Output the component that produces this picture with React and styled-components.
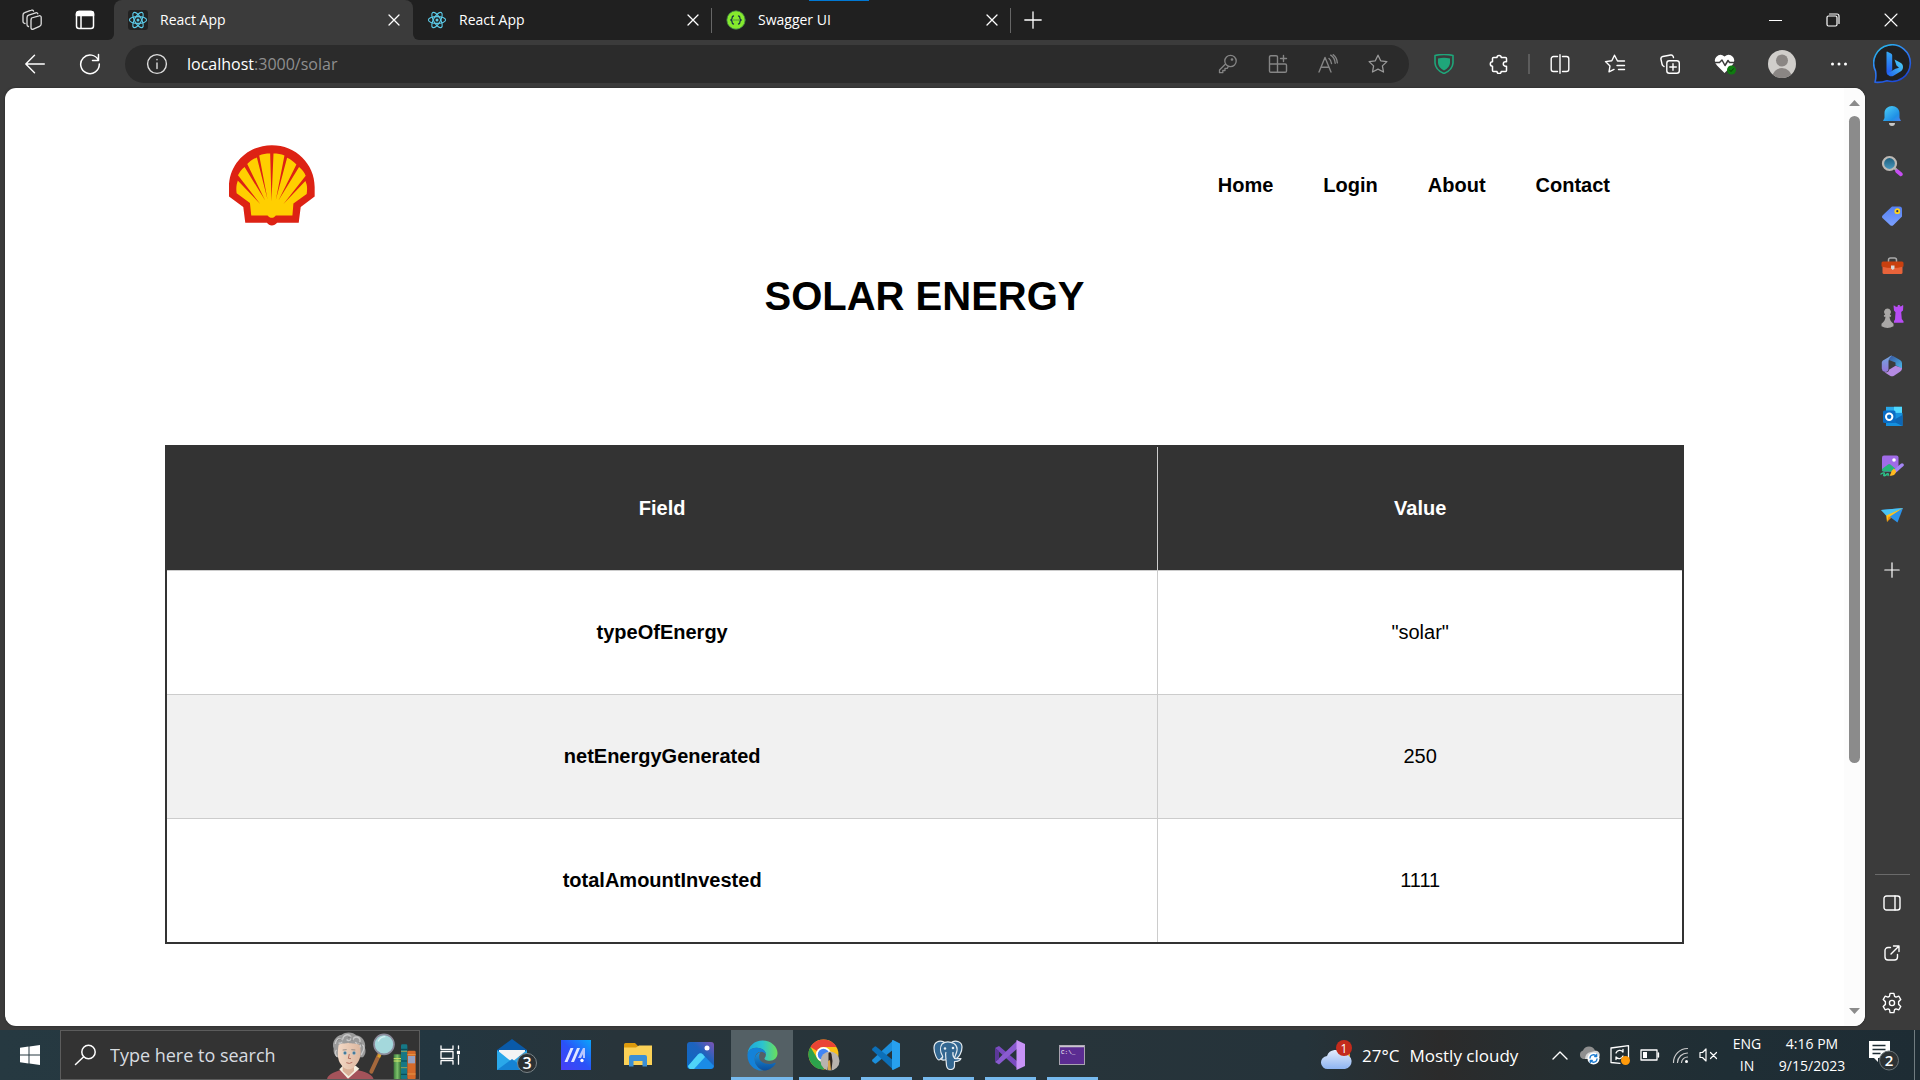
import React from "react";
import styled, { createGlobalStyle } from "styled-components";

const Global = createGlobalStyle`
  *, *::before, *::after { box-sizing: border-box; }
  body { margin: 0; background: #3b3b3b; overflow: hidden; }
  button, input { font: inherit; color: inherit; border: 0; padding: 0; margin: 0; background: none; outline: none; }
  svg { display: block; flex: none; }
`;

const ui = `"Segoe UI", "Open Sans", "Noto Sans", sans-serif`;

const Shell = styled.div`
  height: 100vh;
  display: flex;
  flex-direction: column;
  background: #3b3b3b;
  color: #fff;
  font-family: ${ui};
  font-size: 14px;
`;

/* ---------- tab strip ---------- */
const TabStrip = styled.header`
  position: relative;
  height: 40px;
  flex: none;
  display: flex;
  background: linear-gradient(#202020 50%, #3b3b3b 50%);
`;
const StripStart = styled.div`
  display: flex;
  padding: 0 3px 0 5px;
  background: #202020;
  border-bottom-right-radius: 6px;
`;
const StripRest = styled.div`
  flex: 1;
  display: flex;
  background: #202020;
  border-bottom-left-radius: 6px;
`;
const Cell = styled.button`
  width: ${(p) => p.$w || 50}px;
  height: ${(p) => p.$h || 40}px;
  flex: none;
  display: flex;
  align-items: center;
  justify-content: center;
`;
const Tab = styled.div`
  width: 299px;
  height: 40px;
  flex: none;
  display: flex;
  align-items: center;
  gap: 12px;
  padding: 0 9px 0 14px;
  border-radius: 8px 8px 0 0;
  background: ${(p) =>
    p.$active ? "#3b3b3b" : "linear-gradient(#666, #666) right center / 1px 25px no-repeat"};
`;
const TabTitle = styled.span`
  flex: 1;
  line-height: 20px;
`;
const Favicon = styled.span`
  display: flex;
  border-radius: 3px;
  background: ${(p) => (p.$dark ? "#222" : "transparent")};
`;
const WindowControls = styled.div`
  display: flex;
  margin-left: auto;
`;
const LoadBar = styled.div`
  position: absolute;
  top: 0;
  left: 809px;
  width: 60px;
  height: 1px;
  background: #0078d4;
`;

/* ---------- toolbar ---------- */
const Toolbar = styled.nav`
  height: 48px;
  flex: none;
  display: flex;
  align-items: center;
  padding-left: 7px;
`;
const AddressBar = styled.form`
  flex: 1;
  height: 38px;
  margin: 0 7px 0 8px;
  padding: 0 6px 0 12px;
  border-radius: 19px;
  background: #2b2b2b;
  display: flex;
  align-items: center;
  font-size: 16px;
  color: #8f8f8f;
`;
const Host = styled.label`
  color: #fff;
  line-height: 22px;
  padding-left: 10px;
`;
const UrlInput = styled.input`
  flex: 1;
  min-width: 0;
  line-height: 22px;
`;
const Divider = styled.span`
  width: 2px;
  height: 20px;
  margin: 0 2px;
  background: #5c5c5c;
`;

/* ---------- body ---------- */
const Body = styled.div`
  flex: 1;
  min-height: 0;
  display: flex;
  padding-left: 5px;
`;
const PageFrame = styled.div`
  flex: 1;
  margin-bottom: 4px;
  display: flex;
  overflow: hidden;
  background: #fff;
  border-radius: 11px;
  box-shadow: 0 0 2px #222;
`;
const Page = styled.main`
  flex: 1;
  color: #000;
  font-family: Arial, "Liberation Sans", sans-serif;
  font-size: 20px;
`;
const PageHeader = styled.div`
  display: flex;
  align-items: center;
  justify-content: space-between;
  padding: 57px 234px 0 224px;
`;
const Links = styled.nav`
  display: flex;
  gap: 50px;
`;
const NavLink = styled.a`
  color: #000;
  font-weight: bold;
  text-decoration: none;
`;
const Title = styled.h1`
  margin: 47px 0 126px;
  text-align: center;
  font-size: 40px;
  line-height: 46px;
`;
const DataTable = styled.table`
  width: calc(100% - 320px);
  margin: 0 160px;
  border-collapse: collapse;
  border: 2px solid #333;
  text-align: center;

  th,
  td {
    padding: 50px;
    border: 1px solid #ccc;
    line-height: 23px;
  }
  thead tr {
    background: #333;
    color: #fff;
  }
  tbody tr:nth-child(even) {
    background: #f1f1f1;
  }
`;
const Scrollbar = styled.div`
  width: 21px;
  display: flex;
  flex-direction: column;
  align-items: center;
  padding: 11px 0 11px;
  background: #fcfcfc;
`;
const Track = styled.div`
  flex: 1;
  width: 11px;
  padding: 9px 0;
`;
const Thumb = styled.div`
  height: 73.4%;
  border-radius: 6px;
  background: #8b8b8b;
`;

/* ---------- sidebar ---------- */
const Sidebar = styled.aside`
  width: 55px;
  display: flex;
  flex-direction: column;
  align-items: center;
  padding: 3px 1px 2px 0;
`;
const SideGap = styled.div`
  height: 4px;
`;
const SideBottom = styled.div`
  margin-top: auto;
  border-top: 1px solid #6a6a6a;
  width: 35px;
  padding-top: 3px;
`;

/* ---------- taskbar ---------- */
const Taskbar = styled.footer`
  height: 50px;
  flex: none;
  display: flex;
  align-items: center;
  background: linear-gradient(90deg, #263941 0%, #233640 23%, #28343a 32%, #27343a 55%, #25333a 68%, #2b2b2b 75%, #242f33 82%, #1f2e35 90%, #1e2c34 100%);
`;
const SearchBox = styled.label`
  width: 360px;
  height: 50px;
  display: flex;
  align-items: center;
  border: 1px solid #5c5c5c;
  background: #333;
  padding-left: 13px;
`;
const SearchInput = styled.input`
  flex: 1;
  min-width: 0;
  padding-left: 13px;
  font-size: 18px;
  color: #d8dce0;
  &::placeholder {
    color: #d8dce0;
    opacity: 1;
  }
`;
const TaskList = styled.div`
  display: flex;
  margin-left: 3px;
`;
const TaskItem = styled.button`
  width: 62px;
  height: 50px;
  flex: none;
  display: flex;
  align-items: center;
  justify-content: center;
  background: ${(p) =>
    p.$active
      ? "linear-gradient(#76b9ed, #76b9ed) center bottom / 100% 3px no-repeat, #546065"
      : p.$open
      ? "linear-gradient(#76b9ed, #76b9ed) center bottom / 51px 3px no-repeat"
      : "transparent"};
`;
const Tray = styled.div`
  margin-left: auto;
  display: flex;
  align-items: center;
`;
const Weather = styled.button`
  display: flex;
  align-items: center;
  gap: 10px;
  width: 229px;
  font-size: 17px;
  white-space: nowrap;
`;
const Stack = styled.button`
  width: ${(p) => p.$w}px;
  display: flex;
  flex-direction: column;
  text-align: center;
  line-height: 22px;
  font-size: 14px;
`;
const DesktopEdge = styled.button`
  width: 6px;
  height: 50px;
  border-left: 1px solid #717c81;
`;

/* ---------- drawings ---------- */
const S = ({ w = 20, h = w, vb, c = "#fff", sw = 1.4, children }) => (
  <svg width={w} height={h} viewBox={vb || `0 0 ${w} ${h}`} fill="none" stroke={c} strokeWidth={sw} strokeLinecap="round" strokeLinejoin="round" aria-hidden="true">
    {children}
  </svg>
);

const ReactLogo = () => (
  <S w={20} c="#5ccbe8" sw={1.1}>
    <ellipse cx="10" cy="10" rx="8.6" ry="3.4" />
    <ellipse cx="10" cy="10" rx="8.6" ry="3.4" transform="rotate(60 10 10)" />
    <ellipse cx="10" cy="10" rx="8.6" ry="3.4" transform="rotate(120 10 10)" />
    <circle cx="10" cy="10" r="1.5" fill="#5ccbe8" stroke="none" />
  </S>
);
const SwaggerLogo = () => (
  <S w={20} c="#173647" sw={1.3}>
    <circle cx="10" cy="10" r="9.2" fill="#85ea2d" stroke="#3f7f4a" strokeWidth=".8" />
    <path d="M7.500 6c-1.400 0-1.400.8-1.400 1.900S5.800 9.800 4.800 10c1 .2 1.300 1 1.300 2.100s0 1.900 1.400 1.900M12.500 6c1.400 0 1.400.8 1.400 1.900s.3 1.900 1.300 2.100c-1 .2-1.300 1-1.300 2.100s0 1.900-1.400 1.900" />
    <path d="M8 10h.1M10 10h.1M12 10h.1" strokeWidth="1" />
  </S>
);
const Close = () => (
  <S w={12} sw={1.3}><path d="M1 1l10 10M11 1L1 11" /></S>
);
const Workspaces = () => (
  <S w={20} h={22} c="#ddd" sw={1.3}>
    <path d="M9.500 9l7.500-2.200a1.600 1.600 0 0 1 2.200 1.500V15a2.500 2.500 0 0 1-1.700 2.300l-6.200 2.900a1.600 1.600 0 0 1-2.300-1.500V11z" />
    <path d="M6.500 17.500a2 2 0 0 1-1.500-2V8.500a2.500 2.500 0 0 1 1.700-2.400l7-2.300c1-.3 1.800.1 2.100 1M3 14.500a2 2 0 0 1-2-2V6A2.500 2.500 0 0 1 2.700 3.600L9.300 1.200c1-.4 1.900 0 2.200.9" />
  </S>
);
const TabActions = () => (
  <S w={20} sw={1.5}>
    <rect x="1.500" y="1.500" width="17" height="17" rx="2.500" />
    <path d="M1.500 4A2.500 2.500 0 0 1 4 1.500h12A2.500 2.500 0 0 1 18.500 4v1.500h-17z" fill="#fff" />
    <path d="M6 6v12" />
  </S>
);
const Bell = () => (
  <S w={20} h={22} sw={0}>
    <defs><linearGradient id="bell" x1="0" y1="0" x2="1" y2="1"><stop offset="0" stopColor="#4fd2f7" /><stop offset=".7" stopColor="#1f90e6" /><stop offset="1" stopColor="#4a80f0" /></linearGradient></defs>
    <path d="M10 1c4 0 7.500 3 7.500 7v5l1.500 3H1l1.500-3V8c0-4 3.500-7 7.500-7z" fill="url(#bell)" />
    <path d="M7 18h6a3 3 0 0 1-6 0z" fill="#c8c8c8" />
  </S>
);
const SideSearch = () => (
  <S w={22} sw={0}>
    <defs><linearGradient id="lens" x1="0" y1="0" x2="0" y2="1"><stop offset="0" stopColor="#1b5a78" /><stop offset="1" stopColor="#4c9cc2" /></linearGradient></defs>
    <path d="M13.500 13l2 2" stroke="#a9a9a9" strokeWidth="2.500" />
    <circle cx="8.500" cy="8.500" r="6.500" fill="url(#lens)" stroke="#bdb9b5" strokeWidth="2.200" />
    <path d="M16.200 16.200l3.600 3" stroke="#c64df2" strokeWidth="3.800" />
  </S>
);
const Tag = () => (
  <S w={22} sw={0}>
    <defs><linearGradient id="tag" x1="0" y1="0" x2="0" y2="1"><stop offset="0" stopColor="#5580f0" /><stop offset="1" stopColor="#7ba0ff" /></linearGradient></defs>
    <path d="M11 1.500h7.500a2.500 2.500 0 0 1 2.500 2.500v7.500L12.500 20a2.500 2.500 0 0 1-3.500 0l-7-6.500a2.300 2.300 0 0 1 0-3.500z" fill="url(#tag)" />
    <circle cx="16.300" cy="6.200" r="2" stroke="#ffd21a" strokeWidth="1.800" fill="#27336b" />
  </S>
);
const Toolbox = () => (
  <S w={23} h={18} sw={0}>
    <path d="M7.500 5V3a2 2 0 0 1 2-2h4a2 2 0 0 1 2 2v2" stroke="#aaa" strokeWidth="1.500" />
    <path d="M1.500 9h20v6.500a1.500 1.500 0 0 1-1.500 1.500H3a1.500 1.500 0 0 1-1.500-1.500z" fill="#e8633a" />
    <path d="M2 4.500h19a1.500 1.500 0 0 1 1.500 1.500v3.500q-11 3-22 0V6A1.500 1.500 0 0 1 2 4.500z" fill="#c9400f" />
    <path d="M10 8.500h3.500v3l-1.700 1.500-1.800-1.500z" fill="#d8d8d8" />
  </S>
);
const Chess = () => (
  <S w={24} sw={0}>
    <path d="M13.500 1.500l2 .5V3l2.300-.5V1h2v1.500L22 2v-.8l1.300.3-.3 5-1.800 1.500.6 7 1.700 2.200v1.500h-9.500V17l1-1.500.5-7.300L14 6.500z" fill="#b84df5" />
    <path d="M7.500 4.500a3.400 3.400 0 0 1 2.300 5.900l1.400 1.100-.2 1.200H9.500c.2 3 1.500 5 4 7v2.500a12 12 0 0 1-12 0v-2.500c2.500-2 3.800-4 4-7H4l-.2-1.200 1.400-1.100a3.400 3.400 0 0 1 2.300-5.900z" fill="#a9a7a6" />
  </S>
);
const M365 = () => (
  <S w={22} sw={0}>
    <defs>
      <linearGradient id="ma" x1="0" y1="0" x2="0" y2="1"><stop offset="0" stopColor="#71a7dd" /><stop offset="1" stopColor="#9474d7" /></linearGradient>
      <linearGradient id="mb" x1="0" y1="0" x2="1" y2="1"><stop offset="0" stopColor="#39549f" /><stop offset="1" stopColor="#48b8e9" /></linearGradient>
    </defs>
    <path d="M8.500 1.300q2-1 4 0l6.500 3.700A3.600 3.600 0 0 1 21 8v5.500L14.500 10.300V7.500L8 5z" fill="url(#mb)" />
    <path d="M11 .6c-2 1.500-3.500 3.700-3.500 6v7.700c0 2-2 3-4 2.500A3.600 3.600 0 0 1 .8 13.500V8c0-1.500.7-2.300 2-3.100l6-3.500q1-.7 2.200-.8z" fill="url(#ma)" />
    <path d="M8 14.700l6.500-4 6.500 2.300c0 2-.7 3-2 3.700l-6 4a4 4 0 0 1-4 0l-5.500-3.500c2 .5 4.500-.3 4.500-2.500z" fill="#b58be3" />
  </S>
);
const Outlook = () => (
  <S w={21} sw={0}>
    <path d="M4 .8h16v13H4z" fill="#28a8ea" />
    <path d="M12 .8h8v6h-8z" fill="#50d9ff" />
    <path d="M4 7h16.500v13H4z" fill="#1490df" />
    <path d="M20.500 9L10 15l10.500 5z" fill="#0d66b5" />
    <rect x="1" y="4.500" width="12.500" height="12.500" rx="1.500" fill="#0a6cc4" />
    <circle cx="7.200" cy="10.700" r="3.200" stroke="#fff" strokeWidth="2" />
  </S>
);
const Designer = () => (
  <S w={24} sw={0}>
    <rect x="2" y="1.500" width="16.500" height="16" rx="2" fill="#a06be8" />
    <path d="M2 15l6-4.500q1.200-.8 2.400 0l6 5-3 2H3.500a1.500 1.500 0 0 1-1.500-1z" fill="#25b57a" />
    <circle cx="14" cy="6" r="1.800" fill="#fff" />
    <path d="M22 11l-8 7" stroke="#a486f5" strokeWidth="3.500" />
    <path d="M16 17l-2-2.500-2.500 2.500c-.5 2-1 3.500-2 4.500 4 1 6.500-1.500 6.500-4.500z" fill="#ffb91f" />
    <path d="M1 20c3-2 4-1 3 .5s1 2 3-.5c.8-1 2 0 1 1.500" stroke="#2bc48a" strokeWidth="1.400" />
  </S>
);
const Plane = () => (
  <S w={24} h={20} sw={0}>
    <path d="M1 4l22-2-5.500 14.500-5.700-4.200z" fill="#2c93ea" />
    <path d="M1 4l22-2L6.500 10z" fill="#49c4f4" />
    <path d="M6.200 9.500L23 2 10 10.500l-3 5.500z" fill="#ffc31f" />
    <path d="M11.500 11.500l-4.500 4.500 1.600-5.500z" fill="#e88b0d" />
  </S>
);
const Gear = ({ size = 22 }) => (
  <S w={size} vb="0 0 24 24" sw={1.5}>
    <path d="M9.900 1.500h4.200l.7 3.200 1.600.9 3.100-1 2.100 3.700-2.400 2.200v3l2.400 2.200-2.100 3.700-3.100-1-1.600.9-.7 3.200H9.900l-.7-3.200-1.600-.9-3.100 1-2.100-3.700 2.400-2.200v-3L2.400 8.300l2.100-3.700 3.100 1 1.600-.9z" />
    <circle cx="12" cy="12" r="2.800" />
  </S>
);
const Bing = () => (
  <S w={40} sw={0}>
    <defs>
      <linearGradient id="bo" x1="0" y1="0" x2=".6" y2="1"><stop offset="0" stopColor="#25c4e8" /><stop offset=".5" stopColor="#2f7ef5" /><stop offset="1" stopColor="#1c49d6" /></linearGradient>
      <linearGradient id="bl" x1="0" y1="0" x2="0" y2="1"><stop offset="0" stopColor="#36a9f2" /><stop offset="1" stopColor="#1f55f0" /></linearGradient>
      <linearGradient id="br" x1="0" y1="1" x2="1" y2="0"><stop offset="0" stopColor="#1c5ff0" /><stop offset="1" stopColor="#4fd8f5" /></linearGradient>
    </defs>
    <path d="M2 38.200Q3.500 33 2.500 27A18.300 18.300 0 1 1 14 36.700Q8 38.800 2 38.200z" fill="#1f2022" stroke="url(#bo)" strokeWidth="1.600" />
    <path d="M14 7.500l4 2a1.800 1.800 0 0 1 1.200 1.700V26L15 31a4 4 0 0 1-1.500-3V8z" fill="url(#bl)" />
    <path d="M21.500 15.500l5.500 3a5 5 0 0 1 3 4.500c0 2-1 3.500-2.500 4.500l-7 4.300c-2.500 1.400-5.500 0-6.300-2.300l8.300-4.700 3.500-1-2.500-2.300z" fill="url(#br)" />
  </S>
);

const ShellLogo = () => (
  <svg width="86" height="81" viewBox="235 45 259 243" aria-label="Shell logo" role="img">
    <path d="M364 45c-72 0-129 56-129 126v29l43 31 6 48h65c4 5 9 8 15 8s12-3 16-8h65l6-48 42-31v-29C493 101 436 45 364 45z" fill="#dd2214" />
    <path d="M262 152l67 70-67-86c5-10 11-18 20-25l62 101-54-110c7-8 17-15 29-20l32 127-25-133c10-4 20-6 33-6l4 144 6-144c12 0 23 2 33 6l-26 134 34-127c11 5 20 12 28 20l-54 109 62-101c9 8 16 16 20 26l-67 85 66-69c6 12 6 24 4 39l-40 29-3 36h-50c-4 5-7 7-12 7s-9-2-13-7h-49l-4-38-40-29c-2-15-1-26 4-39z" fill="#ffcf00" />
  </svg>
);

const SearchArt = () => (
  <svg width="93" height="48" viewBox="980 35 279 144" aria-hidden="true">
    <defs>
      <linearGradient id="skin" x1="0" x2="1"><stop offset="0" stopColor="#f3d9c6" /><stop offset="1" stopColor="#dcb79f" /></linearGradient>
      <linearGradient id="gbk" x1="0" x2="1"><stop offset="0" stopColor="#3d7b3c" /><stop offset=".5" stopColor="#7cc06a" /><stop offset="1" stopColor="#2f6a33" /></linearGradient>
    </defs>
    <path d="M983 180c2-18 30-24 50-32h30c20 8 55 10 60 32z" fill="#a4535a" />
    <path d="M1020 150l26 28 34-30-10-8h-40z" fill="#f4efe0" />
    <path d="M1030 135h34v20l-16 16-18-16z" fill="#d9b097" />
    <path d="M1003 88c-8-20 8-40 24-42 12-10 36-8 44 2 16 2 30 18 26 38 4 12 0 22-6 28l-72 2c-10-4-18-14-16-28z" fill="#9a9a9a" />
    <path d="M1018 76c10-6 20-2 28-6 12 4 24 0 36 8 4 26 2 42-10 56-6 8-12 16-24 16s-18-8-24-16c-10-14-10-36-6-58z" fill="url(#skin)" />
    <g fill="none" stroke="#c9c9c9" strokeWidth="4"><path d="M1008 74c0-12 10-20 18-14s-4 16-8 10M1030 60c2-14 18-18 24-8s-8 16-12 8M1060 62c4-14 20-10 22 0s-10 14-14 6M1082 84c2-12 12-8 12 2s-8 14-8 22M1012 92c-6 4-4 16 2 20" /></g>
    <g fill="none" stroke="#6f6f6f" strokeWidth="2"><path d="M1014 64c6-8 16-4 14 4M1046 56c8-6 14 0 12 8M1074 72c8-6 16 2 12 8M1030 92l12-1M1056 91l12 1" /></g>
    <circle cx="1037" cy="101" r="5" fill="#5c9bc2" /><circle cx="1064" cy="101" r="5" fill="#5c9bc2" />
    <circle cx="1037" cy="101" r="2" fill="#23404f" /><circle cx="1064" cy="101" r="2" fill="#23404f" />
    <path d="M1050 104l-3 13 8 1M1041 130q9 5 18-1" stroke="#b56f61" strokeWidth="3" fill="none" />
    <path d="M1140 105l-24 52" stroke="#a5683c" strokeWidth="12" strokeLinecap="round" />
    <path d="M1144 100l-6 14" stroke="#d9a32b" strokeWidth="9" />
    <circle cx="1154" cy="75" r="30" fill="#a4d8dc" stroke="#8b8b9b" strokeWidth="5" />
    <path d="M1136 66q8-14 22-14" stroke="#d6f1f2" strokeWidth="4" fill="none" />
    <rect x="1183" y="105" width="22" height="75" fill="url(#gbk)" />
    <path d="M1183 118h22M1183 125h22" stroke="#d8e86a" strokeWidth="3" />
    <rect x="1205" y="75" width="19" height="105" rx="4" fill="#167886" />
    <path d="M1205 90h19M1205 125h19M1205 165h19" stroke="#0a4550" strokeWidth="3" />
    <path d="M1205 96h19M1205 145h19" stroke="#d8b43d" strokeWidth="2" />
    <rect x="1224" y="94" width="25" height="86" rx="4" fill="#d4692a" />
    <rect x="1226" y="110" width="21" height="22" fill="#97a2c4" />
    <path d="M1224 106h25M1224 164h25" stroke="#f0b055" strokeWidth="2" />
  </svg>
);

const MailIcon = () => (
  <svg width="46" height="38" viewBox="1 0 46 38" aria-hidden="true">
    <path d="M7 14L22 3l15 11v4H7z" fill="#0a5aa8" />
    <path d="M9 14h26v14H9z" fill="#f4f4f4" />
    <path d="M7 14l15 12 15-12v20H7z" fill="#2aa8ea" />
    <path d="M7 34l15-11 15 11z" fill="#1583d4" />
    <circle cx="37" cy="27" r="9.500" fill="#2b3134" stroke="#7b8488" />
    <text x="37" y="33" fill="#fff" fontFamily="Open Sans, sans-serif" fontSize="16" fontWeight="600" textAnchor="middle">3</text>
  </svg>
);
const AsusIcon = () => (
  <svg width="30" height="30" viewBox="0 0 30 30" aria-hidden="true">
    <defs><linearGradient id="as" x1="0" y1="1" x2="1" y2="0"><stop offset="0" stopColor="#4a3df5" /><stop offset=".5" stopColor="#2a52f8" /><stop offset="1" stopColor="#0aa6fb" /></linearGradient></defs>
    <rect width="30" height="30" fill="url(#as)" />
    <path d="M3.500 22L9.500 8h3L6.500 22zM10 22l6-14h3l-6 14z" fill="#dfe6ff" />
    <path d="M17.500 17L22 8h2v10h-2v-4l-2 4h-3z" fill="#b9c8ff" />
    <circle cx="21" cy="20.500" r="1.700" fill="#fff" />
  </svg>
);
const FolderIcon = () => (
  <svg width="28" height="24" viewBox="0 0 28 24" aria-hidden="true">
    <path d="M0 1.500A1.500 1.500 0 0 1 1.500 0H11l3 3v4H0z" fill="#dd9a0c" />
    <path d="M0 4.500h12l3-2h13V22H0z" fill="#fbd157" />
    <path d="M5 23.500V14a2 2 0 0 1 2-2h14a2 2 0 0 1 2 2v9.500h-4.500V18h-9v5.500z" fill="#3b8fd6" />
  </svg>
);
const PhotosIcon = () => (
  <svg width="27" height="27" viewBox="0 0 27 27" aria-hidden="true">
    <defs><linearGradient id="ph" x1="0" y1="1" x2="1" y2="0"><stop offset="0" stopColor="#0b6ac5" /><stop offset=".6" stopColor="#1e63bd" /><stop offset="1" stopColor="#8054b4" /></linearGradient></defs>
    <rect width="27" height="27" rx="3" fill="url(#ph)" />
    <path d="M1 24L11 12.500q2.500-2.500 5 0L27 24q-1 3-3 3H3q-1.500 0-2-3z" fill="#1a8be6" />
    <path d="M1 24L11 12.500q2.500-2.500 5 0l2 2.500L7 27H3q-1.500 0-2-3z" fill="#4fd4f9" />
    <circle cx="20" cy="6" r="2.500" fill="#fff" />
  </svg>
);
const EdgeIcon = () => (
  <svg width="31" height="31" viewBox="0 0 32 32" aria-hidden="true">
    <defs>
      <linearGradient id="e1" x1="0" x2="1"><stop offset="0" stopColor="#1ba6dd" /><stop offset=".5" stopColor="#2cc3cf" /><stop offset="1" stopColor="#6be05a" /></linearGradient>
      <linearGradient id="e2" x1="0" y1="0" x2="0" y2="1"><stop offset="0" stopColor="#1b93dc" /><stop offset="1" stopColor="#0b4f9e" /></linearGradient>
    </defs>
    <path d="M.5 14C1.500 6 8 .5 16 .5c9 0 15.500 6.500 15.500 13 0 5-3.500 8-8 8-4 0-5.500-1.500-5.500-2.300 0-.7 1.500-1.500 1.500-4.200C19.500 11 15 8 10 8 5 8 1.500 11 .5 14z" fill="url(#e1)" />
    <path d="M.5 15C1 10.500 5 8 10 8c5 0 9.500 3 9.500 7 0 0-1.500-3-5-3S8 15 8 20s4 10 9 11.500C8 32.500 0 25 .5 15z" fill="#1482d8" />
    <path d="M14 12.500C10 14 8 17 8 20.500c0 5 4 9.500 9.500 11 5 0 9.500-3 12-7 .5-1-.3-1.300-1-1-6 3-16 .5-16-6 0-2 .5-3.500 1.500-5z" fill="url(#e2)" />
  </svg>
);
const ChromeIcon = () => (
  <svg width="32" height="32" viewBox="0 0 32 32" aria-hidden="true">
    <circle cx="15.500" cy="15.500" r="15" fill="#fbc116" />
    <path d="M2.500 8A15 15 0 0 1 28.500 8H15.500a7.500 7.500 0 0 0-6.500 4z" fill="#ea4335" />
    <path d="M2.500 8A15 15 0 0 0 15.500 30.500L21 20a7 7 0 0 1-12-1z" fill="#2ca24c" />
    <circle cx="15.500" cy="15.500" r="7.500" fill="#fff" /><circle cx="15.500" cy="15.500" r="5.700" fill="#4285f4" />
    <circle cx="22" cy="22" r="9.500" fill="#b9b3ad" />
    <path d="M20.500 14q2-2 3 1l1 7-1 9h-4l1-8z" fill="#2d2521" /><path d="M20 22l2-1 1 10h-3z" fill="#d7a34b" />
  </svg>
);
const CodeIcon = () => (
  <svg width="30" height="30" viewBox="0 0 30 30" aria-hidden="true">
    <path d="M22 .5L1.500 19.500q-1 1 0 2l2 1.800q.8.700 1.800 0L23 9z" fill="#1c8fdc" />
    <path d="M22 29.500L1.500 10.500q-1-1 0-2l2-1.800q.8-.7 1.800 0L23 21z" fill="#0c6fb8" />
    <path d="M22 0l7 3.500v23L22 30q-1 0-1-1V1q0-1 1-1z" fill="#27a0ee" />
  </svg>
);
const PgIcon = () => (
  <svg width="30" height="30" viewBox="0 0 30 30" aria-hidden="true" fill="#336791" stroke="#e4ebf0" strokeWidth="1.200" strokeLinejoin="round">
    <path d="M11 2C6 0 1 2 1 8c0 5 3 12 5 12 1.500 0 2.500-2 3.500-3zM19 2c4-2 10-.5 10 5 0 5-3 10-5 11l-4 1z" />
    <path d="M9 4q5-4 12-.5c3 2 3.500 6 2.500 9-.8 2.500-2 4.500-2 6 2 .5 5 0 6.500 0-1 2.500-4 3-6.500 3v4c0 3-2 4-4 4s-3.500-1-4-4l-.5-6c-2 1-4 .5-5-.5 1.500-.5 2-1.500 1.500-3C7 12 7 7 9 4z" />
    <path d="M13 19c-.5-3-1-5 0-7M21.500 18c-1-1-2-3-1.500-6" fill="none" />
    <circle cx="12" cy="8.500" r=".7" /><circle cx="20" cy="8" r=".7" />
  </svg>
);
const VsIcon = () => (
  <svg width="30" height="30" viewBox="0 0 30 30" aria-hidden="true">
    <path d="M0 8l4-2L23 22v7z" fill="#7a4bc0" /><path d="M0 22l4 2.500L23 8V0z" fill="#8a5bd0" />
    <path d="M0 8v14l4-3v-8z" fill="#5b3798" />
    <path d="M21.500 0L30 4v22l-8.500 4z" fill="#c893f7" />
  </svg>
);
const TermIcon = () => (
  <svg width="26" height="20" viewBox="0 0 26 20" aria-hidden="true">
    <rect x=".5" y=".5" width="25" height="19" fill="#5b2c92" stroke="#a9a3b0" />
    <path d="M1 1.500h24" stroke="#c9c5ce" strokeWidth="1.500" />
    <text x="2" y="9" fill="#fff" fontFamily="Liberation Mono, monospace" fontSize="6">C:\_</text>
  </svg>
);
const WeatherIcon = () => (
  <svg width="31" height="30" viewBox="0 0 31 30" aria-hidden="true">
    <defs><linearGradient id="cl" x1="0" y1="0" x2="0" y2="1"><stop offset="0" stopColor="#e3ecfb" /><stop offset="1" stopColor="#8db4f2" /></linearGradient></defs>
    <circle cx="23" cy="15" r="6" fill="#f3a623" />
    <path d="M7 29a6.500 6.500 0 0 1-1-13 9 9 0 0 1 16-2 7.500 7.500 0 0 1 2 15z" fill="url(#cl)" />
    <circle cx="23" cy="8" r="8" fill="#c42b1c" />
    <text x="23" y="12.500" fill="#fff" fontFamily="Open Sans, sans-serif" fontSize="12" textAnchor="middle">1</text>
  </svg>
);
const NoticeIcon = () => (
  <svg width="32" height="32" viewBox="0 0 32 32" aria-hidden="true">
    <path d="M1 2h21v17H10v4l-4-4H1z" fill="#fff" />
    <path d="M4.500 6.500h13M4.500 10.500h13M4.500 14.500h8" stroke="#1e2c34" strokeWidth="1.300" />
    <circle cx="21" cy="21.500" r="9.500" fill="#2d3234" stroke="#6c7579" />
    <text x="21" y="27" fill="#fff" fontFamily="Open Sans, sans-serif" fontSize="15" fontWeight="600" textAnchor="middle">2</text>
  </svg>
);

const tabs = [
  { title: "React App", icon: <ReactLogo />, active: true },
  { title: "React App", icon: <ReactLogo /> },
  { title: "Swagger UI", icon: <SwaggerLogo /> },
];
const TabView = ({ tab }) => (
  <Tab $active={tab.active}>
    <Favicon $dark={tab.active}>{tab.icon}</Favicon>
    <TabTitle>{tab.title}</TabTitle>
    <Cell $w={20} $h={20} aria-label="Close tab"><Close /></Cell>
  </Tab>
);

const sideApps = [
  ["Notifications", Bell], ["Search", SideSearch], ["Shopping", Tag], ["Tools", Toolbox], ["Games", Chess],
  ["Microsoft 365", M365], ["Outlook", Outlook], ["Designer", Designer], ["Drop", Plane],
];
const taskApps = [
  ["Mail", MailIcon], ["MyASUS", AsusIcon], ["File Explorer", FolderIcon], ["Photos", PhotosIcon],
  ["Edge", EdgeIcon, "active"], ["Chrome", ChromeIcon, "open"], ["VS Code", CodeIcon, "open"],
  ["pgAdmin", PgIcon, "open"], ["Visual Studio", VsIcon, "open"], ["Terminal", TermIcon, "open"],
];
const rows = [
  ["typeOfEnergy", '"solar"'],
  ["netEnergyGenerated", "250"],
  ["totalAmountInvested", "1111"],
];

export default function App() {
  return (
    <Shell>
      <Global />
      <TabStrip>
        <StripStart>
          <Cell $w={54} aria-label="Workspaces"><Workspaces /></Cell>
          <Cell $w={52} aria-label="Tab actions"><TabActions /></Cell>
        </StripStart>
        <TabView tab={tabs[0]} />
        <StripRest>
          <TabView tab={tabs[1]} />
          <TabView tab={tabs[2]} />
          <Cell $w={44} aria-label="New tab"><S w={18} sw={1.3}><path d="M9 .8v16.400M.8 9h16.400" /></S></Cell>
          <WindowControls>
            <Cell $w={58} aria-label="Minimize"><S w={13} sw={1}><path d="M0 6.500h13" /></S></Cell>
            <Cell $w={58} aria-label="Restore"><S w={14} sw={1.200}><rect x="1" y="3" width="10" height="10" rx="1.500" /><path d="M3.500 1H11a2 2 0 0 1 2 2v7.500" /></S></Cell>
            <Cell $w={58} aria-label="Close"><S w={14} sw={1.100}><path d="M1 1l12 12M13 1L1 13" /></S></Cell>
          </WindowControls>
        </StripRest>
        <LoadBar />
      </TabStrip>

      <Toolbar>
        <Cell $w={55} aria-label="Back"><S w={20} sw={1.400}><path d="M19.300 10H.8M9.500 1.300L.8 10l8.700 8.700" /></S></Cell>
        <Cell $w={55} aria-label="Refresh"><S w={22} sw={1.500}><path d="M19.500 7.500A9.300 9.300 0 1 0 20.300 11M19.500 1.500v6h-6" /></S></Cell>
        <AddressBar onSubmit={(e) => e.preventDefault()}>
          <Cell $w={40} type="button" aria-label="Site information"><S w={22} c="#ddd" sw={1.400}><circle cx="11" cy="11" r="9.400" /><path d="M11 10v5.500M11 6.500v.3" /></S></Cell>
          <Host htmlFor="url">localhost</Host>
          <UrlInput id="url" defaultValue=":3000/solar" />
          <Cell type="button" aria-label="Passwords"><S w={20} c="#858585" sw={1.300}><circle cx="12.500" cy="7" r="5.700" /><circle cx="14" cy="5.500" r=".7" /><path d="M7.500 10L1.500 16v2.700h3.300v-2.200H7v-2.200h2.200l1.200-1.800" /></S></Cell>
          <Cell type="button" aria-label="Add app"><S w={20} c="#858585" sw={1.400}><path d="M9.500 10V3a1.300 1.300 0 0 0-1.300-1.300H2.800A1.300 1.300 0 0 0 1.500 3v7zM1.500 10v7a1.300 1.300 0 0 0 1.300 1.300h14.400a1.300 1.300 0 0 0 1.300-1.300v-5.700a1.300 1.300 0 0 0-1.300-1.300zM9.500 10v8.300M15.500 1.500v6M12.500 4.500h6" /></S></Cell>
          <Cell type="button" aria-label="Read aloud"><S w={20} c="#858585" sw={1.400}><path d="M1 18L7 3.500 13 18M3 13.300h8M11 4.500q2 1.500 2.500 5M12.700 1.200q4 2.500 4.500 8M15.300.8q3.700 3 4 8" /></S></Cell>
          <Cell type="button" aria-label="Favorite"><S w={20} c="#9a9a9a" sw={1.300}><path d="M10 1.200l2.700 5.600 6.200.8-4.500 4.300 1.100 6.100L10 15.100 4.500 18l1.100-6.100L1.100 7.600l6.200-.8z" /></S></Cell>
        </AddressBar>
        <Cell $w={55} aria-label="Shield"><S w={20} sw={0}><path d="M1 1.500q9-2 18 0V9q-.5 7-9 10.500Q1.500 16 1 9z" stroke="#1fa67a" strokeWidth="1.600" /><path d="M4 4.500q6-1.300 12 0V9q-.5 5-6 7.500Q4.500 14 4 9z" fill="#1fa67a" /></S></Cell>
        <Cell $w={55} aria-label="Extensions"><S w={20} sw={1.500}><path d="M3.500 4.500a1 1 0 0 1 1-1h3.500a2.100 2.100 0 0 1 4.200 0h4.300a1 1 0 0 1 1 1v3.300h-1a2.200 2.200 0 0 0 0 4.400h1v4.300a1 1 0 0 1-1 1h-4.300a2.100 2.100 0 0 1-4.200 0H4.500a1 1 0 0 1-1-1v-4.300a2.200 2.200 0 0 1 0-4.400z" /></S></Cell>
        <Divider />
        <Cell $w={55} aria-label="Split screen"><S w={20} sw={1.400}><path d="M7.500 2.500H3.500A2.300 2.300 0 0 0 1.200 4.800v10.400a2.300 2.300 0 0 0 2.300 2.300h4M12.500 2.500h4a2.300 2.300 0 0 1 2.300 2.300v10.400a2.300 2.300 0 0 1-2.300 2.300h-4M10 .8v18.400" /></S></Cell>
        <Cell $w={55} aria-label="Favorites"><S w={22} h={20} sw={1.400}><path d="M20.500 7h-7l-3-5.800-2.700 5.600-6.300.8 4.500 4.300-1 6 5-2.500M13 11.500h7.500M14.500 15.500h6" /></S></Cell>
        <Cell $w={55} aria-label="Collections"><S w={20} sw={1.400}><rect x="6.800" y="6.800" width="12.500" height="12.500" rx="2.500" /><path d="M13 9.800v6.500M9.800 13h6.500M4 12.500l-1-.8a3 3 0 0 1-1-1.700L.9 5a2.300 2.300 0 0 1 1.800-2.500l8-1.500a2.300 2.300 0 0 1 2.500 1.500l.3 1" /></S></Cell>
        <Cell $w={55} aria-label="Browser essentials"><S w={22} h={22} sw={0}><path d="M10.500 20L3 12.500Q-1 8 2.200 4q4-4 8.300-.5Q15 0 19 4q3 4-1 8.500z" fill="#fff" /><path d="M0 9.500h5.500l2.500-2.500 3 5.500 3-5 1.500 2H22" stroke="#3b3b3b" strokeWidth="1.500" /><circle cx="17.500" cy="17" r="4.500" fill="#0f7b10" /><path d="M15.500 17l1.500 1.500 2.500-2.800" stroke="#063c07" strokeWidth="1" /></S></Cell>
        <Cell $w={60} aria-label="Profile"><S w={28} sw={0}><defs><clipPath id="av"><circle cx="14" cy="14" r="14" /></clipPath></defs><g clipPath="url(#av)"><rect width="28" height="28" fill="#d0cecb" /><circle cx="14" cy="10.500" r="6" fill="#8a8684" /><circle cx="14" cy="28" r="10" fill="#8a8684" /></g></S></Cell>
        <Cell $w={54} aria-label="More"><S w={18} h={4} sw={0}><g fill="#fff"><circle cx="2.500" cy="2" r="1.500" /><circle cx="9" cy="2" r="1.500" /><circle cx="15.500" cy="2" r="1.500" /></g></S></Cell>
        <Cell $w={54} aria-label="Bing chat"><Bing /></Cell>
      </Toolbar>

      <Body>
        <PageFrame>
          <Page>
            <PageHeader>
              <ShellLogo />
              <Links>
                {["Home", "Login", "About", "Contact"].map((t) => (
                  <NavLink href="#" key={t}>{t}</NavLink>
                ))}
              </Links>
            </PageHeader>
            <Title>SOLAR ENERGY</Title>
            <DataTable>
              <thead><tr><th>Field</th><th>Value</th></tr></thead>
              <tbody>
                {rows.map(([f, v]) => (
                  <tr key={f}><th scope="row">{f}</th><td>{v}</td></tr>
                ))}
              </tbody>
            </DataTable>
          </Page>
          <Scrollbar>
            <S w={11} h={8} sw={0}><path d="M0 7l5.500-6L11 7z" fill="#8b8b8b" /></S>
            <Track><Thumb /></Track>
            <S w={11} h={8} sw={0}><path d="M0 1l5.500 6L11 1z" fill="#8b8b8b" /></S>
          </Scrollbar>
        </PageFrame>
        <Sidebar>
          {sideApps.map(([name, Icon]) => (
            <Cell $w={35} $h={50} aria-label={name} key={name}><Icon /></Cell>
          ))}
          <SideGap />
          <Cell $w={35} $h={50} aria-label="Customize"><S w={16} sw={1.200}><path d="M8 .8v14.400M.8 8h14.400" /></S></Cell>
          <SideBottom>
            <Cell $w={35} $h={50} aria-label="Hide sidebar"><S w={18} h={16} sw={1.400}><rect x="1" y="1" width="16" height="14" rx="2.500" /><path d="M12 1v14" /></S></Cell>
            <Cell $w={35} $h={50} aria-label="Open in window"><S w={16} sw={1.400}><path d="M6.500 2.500H4A3 3 0 0 0 1 5.500V12a3 3 0 0 0 3 3h6.500a3 3 0 0 0 3-3V9.500M9.500 1H15v5.500M15 1L7 9" /></S></Cell>
            <Cell $w={35} $h={50} aria-label="Settings"><Gear /></Cell>
          </SideBottom>
        </Sidebar>
      </Body>

      <Taskbar>
        <Cell $w={60} $h={50} aria-label="Start">
          <S w={20} sw={0}><path d="M0 2.800l8.500-1.200v8H0zM9.500 1.400L20 0v9.600H9.500zM0 10.500h8.500v8L0 17.300zM9.500 10.500H20V20L9.500 18.600z" fill="#fff" /></S>
        </Cell>
        <SearchBox>
          <S w={23} sw={1.500}><circle cx="14.500" cy="8" r="6.700" /><path d="M9.700 12.700L1.500 20.500" /></S>
          <SearchInput placeholder="Type here to search" aria-label="Type here to search" />
          <SearchArt />
        </SearchBox>
        <Cell $w={60} $h={50} aria-label="Task view">
          <S w={20} sw={1.300}><path d="M1 .8v3.500h12V.8M1 19.200v-3.500h12v3.500M1 6.500h12v7H1zM18.500.8v3M18.500 10.500v8.700" /><rect x="17.500" y="6.500" width="2" height="2" fill="#fff" /></S>
        </Cell>
        <TaskList>
          {taskApps.map(([name, Icon, state]) => (
            <TaskItem key={name} aria-label={name} $active={state === "active"} $open={state === "open"}><Icon /></TaskItem>
          ))}
        </TaskList>
        <Tray>
          <Weather><WeatherIcon /><span>27°C</span><span>Mostly cloudy</span></Weather>
          <Cell $w={20} $h={50} aria-label="Hidden icons"><S w={16} h={9} sw={1.400}><path d="M1 8l7-7 7 7" /></S></Cell>
          <Cell $w={38} $h={50} aria-label="OneDrive"><S w={22} h={20} sw={0}><path d="M5 14a4.500 4.500 0 0 1 0-8.500 6.500 6.500 0 0 1 12 0A4 4 0 0 1 18 14z" fill="#8f8f8f" /><path d="M7 14q0-6 6-7l4-1A4 4 0 0 1 18 14z" fill="#d5d5d5" /><circle cx="15.500" cy="13.500" r="6" fill="#fff" /><path d="M12 13a3.500 3.500 0 0 1 6.500-1.500M19 14a3.500 3.500 0 0 1-6.500 1.500M18.700 9.500v2h-2M12.300 17.500v-2h2" stroke="#1a7ad0" strokeWidth="1.300" /></S></Cell>
          <Cell $w={24} $h={50} aria-label="Update"><S w={20} h={20} sw={1.300}><path d="M1 3l17.500-2.300v12M1 3v14.500l9 .8M6 8a4 4 0 0 1 7-1V4.500M13 11a4 4 0 0 1-7 1v2.500" /><circle cx="15.500" cy="15.500" r="4.500" fill="#ff9a0a" stroke="none" /></S></Cell>
          <Cell $w={36} $h={50} aria-label="Battery"><S w={20} h={12} sw={1.300}><path d="M1 1h16v10H1zM18.500 4v4" /><rect x="3" y="3" width="4" height="6" fill="#fff" stroke="none" /></S></Cell>
          <Cell $w={24} $h={50} aria-label="Network"><S w={17} h={17} c="#ccc" sw={1.200}><path d="M1.500 15.500A14 14 0 0 1 15.500 1.500M5.500 15.500a10 10 0 0 1 10-9.500M9.500 15.500a6 6 0 0 1 6-5.500" /><circle cx="14.500" cy="14.500" r="1.500" fill="#fff" stroke="none" /></S></Cell>
          <Cell $w={32} $h={50} aria-label="Volume"><S w={19} h={14} sw={1.200}><path d="M1 4.500h2.500L7 1v12L3.500 9.500H1zM11.500 4.500l6 6M17.500 4.500l-6 6" /></S></Cell>
          <Stack $w={46}><span>ENG</span><span>IN</span></Stack>
          <Stack $w={84}><span>4:16 PM</span><span>9/15/2023</span></Stack>
          <Cell $w={60} $h={50} aria-label="Notifications"><NoticeIcon /></Cell>
          <DesktopEdge aria-label="Show desktop" />
        </Tray>
      </Taskbar>
    </Shell>
  );
}
